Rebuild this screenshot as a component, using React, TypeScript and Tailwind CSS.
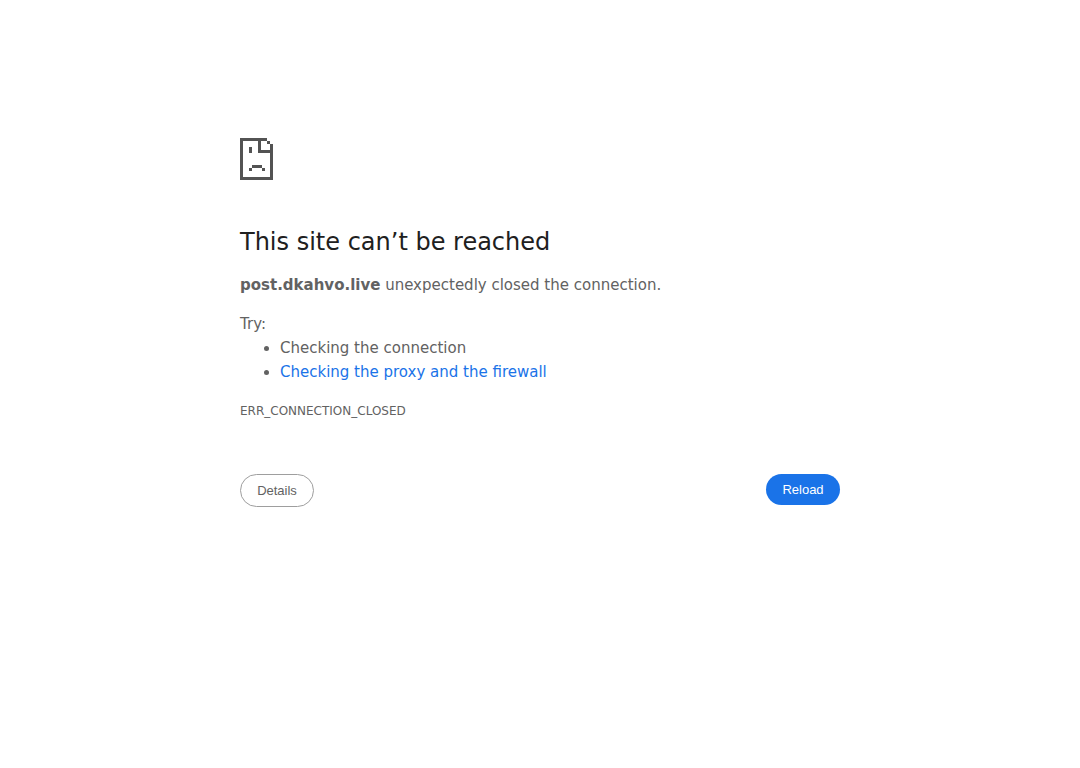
import React from "react";

const SadPageIcon = () => {
  return (
    <svg
      width="33"
      height="42"
      viewBox="0 0 33 42"
      fill="#535353"
      shapeRendering="crispEdges"
      aria-hidden="true"
    >
      {/* sheet outline */}
      <path d="M0 0h27v3H3v36h27V6h3v36H0z" />
      {/* folded corner */}
      <path d="M18 3h3v9h9v3H18z" />
      <path d="M27 3h3v3h-3z" />
      {/* face */}
      <path d="M9 9h3v6H9z" />
      <path d="M12 27h10v3H12z" />
      <path d="M9 30h3v3H9z" />
      <path d="M22 30h3v3h-3z" />
    </svg>
  );
};

const App = () => {
  return (
    <main className="mx-auto max-w-[600px] pt-[138px] font-['DejaVu_Sans',sans-serif] text-[15px] leading-6 text-[#626262]">
      <SadPageIcon />
      <h1 className="mt-[47px] mb-4 text-2xl leading-[30px] text-[#202020]">
        This site can’t be reached
      </h1>
      <p>
        <strong className="font-bold">post.dkahvo.live</strong> unexpectedly
        closed the connection.
      </p>
      <div className="mt-[15px]">
        <p>Try:</p>
        <ul className="list-disc pl-10">
          <li>Checking the connection</li>
          <li>
            <a href="#buttons" className="text-[#1a73e8]">
              Checking the proxy and the firewall
            </a>
          </li>
        </ul>
      </div>
      <div className="mt-[15px] text-xs leading-6">ERR_CONNECTION_CLOSED</div>
      <div
        id="buttons"
        className="mt-[51px] flex items-start justify-between font-['Liberation_Sans',sans-serif] text-[13px] leading-[15px]"
      >
        <button
          type="button"
          className="min-w-[74px] rounded-full border border-[#9e9e9e] px-4 py-2"
        >
          Details
        </button>
        <button
          type="button"
          className="min-w-[74px] rounded-full bg-[#1a73e8] px-4 py-2 text-white"
        >
          Reload
        </button>
      </div>
    </main>
  );
};

export default App;
